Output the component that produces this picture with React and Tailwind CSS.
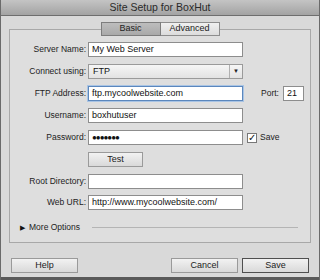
import React from "react";

const font = { fontFamily: '"Liberation Sans", Arial, sans-serif' };

function Field({ label, children }) {
    return (
        <div className="flex items-center h-[15px]">
            <div className="w-[78px] pr-[2px] text-right text-[8.5px] text-[#222]">{label}</div>
            {children}
        </div>
    );
}

function TextBox({ value, focused, type = "text", w = "w-[155px]" }) {
    return (
        <div
            className={
                "h-[15px] bg-white flex items-center px-[3px] text-[9px] text-[#111] " +
                w +
                (focused
                    ? " border border-[#5b87bd] shadow-[0_0_0_1px_#a9c4e4]"
                    : " border border-[#8d8d8d]")
            }
        >
            {type === "password" ? <span className="tracking-[-1px] text-[8px]">●●●●●●●</span> : value}
        </div>
    );
}

function Button({ children, primary, w = "w-[67px]" }) {
    return (
        <div
            className={
                "h-[15px] flex items-center justify-center text-[9px] text-[#222] bg-gradient-to-b from-[#f2f2f2] to-[#d9d9d9] " +
                w +
                (primary ? " border border-[#4f4f4f]" : " border border-[#9a9a9a]")
            }
        >
            {children}
        </div>
    );
}

export default function App() {
    return (
        <div className="w-[320px] h-[280px] bg-[#d9d9d9] flex flex-col border-l border-r border-[#6a6a6a]" style={font}>
            {/* Title bar */}
            <div className="h-[16px] shrink-0 bg-gradient-to-b from-[#c4c4c4] to-[#a3a3a3] border-b border-[#6e6e6e] flex items-center justify-center text-[10.5px] text-[#2a2a2a]">
                Site Setup for BoxHut
            </div>

            {/* Tabs */}
            <div className="flex justify-center mt-[6px] relative z-10 h-[14px]">
                <div className="w-[60px] h-[14px] flex items-center justify-center text-[9px] text-[#222] bg-gradient-to-b from-[#bdbdbd] to-[#a9a9a9] border border-[#7d7d7d]">
                    Basic
                </div>
                <div className="w-[59px] h-[14px] flex items-center justify-center text-[9px] text-[#222] bg-gradient-to-b from-[#f0f0f0] to-[#dcdcdc] border border-l-0 border-[#8d8d8d]">
                    Advanced
                </div>
            </div>

            {/* Panel */}
            <div className="mx-[8px] -mt-[7px] h-[214px] border border-[#a8a8a8] bg-[#dedede] pt-[12px] flex flex-col">
                <div className="flex flex-col gap-[7px]">
                    <Field label="Server Name:">
                        <TextBox value="My Web Server" />
                    </Field>
                    <Field label="Connect using:">
                        <div className="w-[155px] h-[15px] border border-[#9a9a9a] bg-gradient-to-b from-[#f6f6f6] to-[#e2e2e2] flex items-center text-[9px] text-[#111]">
                            <span className="flex-1 pl-[4px]">FTP</span>
                            <span className="w-[13px] h-full border-l border-[#b0b0b0] flex items-center justify-center text-[6px] text-[#222]">▼</span>
                        </div>
                    </Field>
                    <Field label="FTP Address:">
                        <TextBox value="ftp.mycoolwebsite.com" focused />
                        <span className="ml-[18px] text-[8.5px] text-[#222]">Port:</span>
                        <div className="ml-[4px]">
                            <TextBox value="21" w="w-[21px]" />
                        </div>
                    </Field>
                    <Field label="Username:">
                        <TextBox value="boxhutuser" />
                    </Field>
                    <Field label="Password:">
                        <TextBox type="password" />
                        <div className="ml-[4px] w-[10px] h-[10px] border border-[#777] bg-white flex items-center justify-center text-[10px] leading-none text-[#111]">
                            ✓
                        </div>
                        <span className="ml-[3px] text-[8.5px] text-[#222]">Save</span>
                    </Field>
                    <Field label="">
                        <Button w="w-[55px]">Test</Button>
                    </Field>
                    <Field label="Root Directory:">
                        <TextBox value="" />
                    </Field>
                    <div className="-mt-[1px]">
                        <Field label="Web URL:">
                            <TextBox value="http://www.mycoolwebsite.com/" />
                        </Field>
                    </div>
                </div>

                <div className="mt-[11px] flex items-center pl-[10px] pr-[12px] h-[12px]">
                    <span className="text-[7px] text-[#111] leading-none">▶</span>
                    <span className="ml-[4px] text-[8.5px] text-[#222]">More Options</span>
                    <div className="flex-1 ml-[12px] h-px bg-[#b4b4b4]" />
                </div>
            </div>

            {/* Bottom buttons */}
            <div className="flex items-center mt-[15px] px-[10px]">
                <Button>Help</Button>
                <div className="flex-1" />
                <Button>Cancel</Button>
                <div className="ml-[4px]">
                    <Button primary>Save</Button>
                </div>
            </div>
            <div className="flex-1" />
            <div className="h-[3px] bg-[#5a5a5a]" />
        </div>
    );
}
